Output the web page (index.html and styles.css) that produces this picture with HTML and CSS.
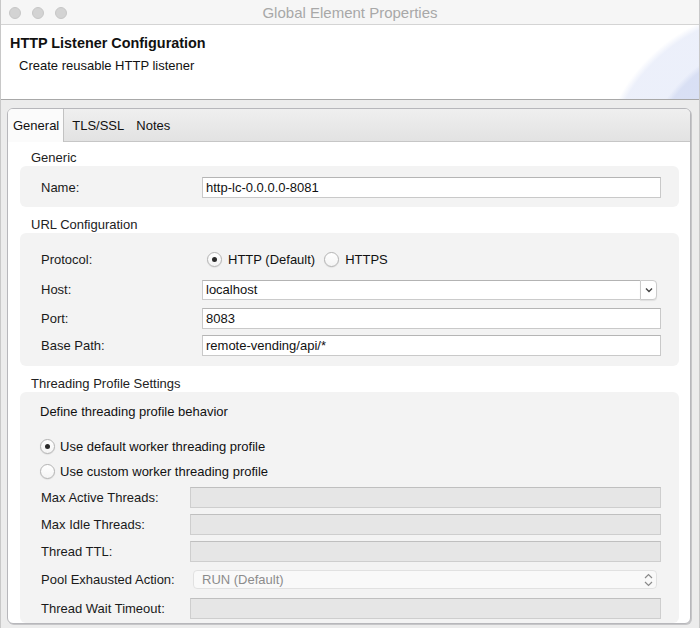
FILE: index.html
```html
<!DOCTYPE html>
<html>
<head>
<meta charset="utf-8">
<link rel="stylesheet" href="styles.css">
</head>
<body>
<div class="window">
  <div class="titlebar">
    <div class="lights"><span class="light"></span><span class="light"></span><span class="light"></span></div>
    <div class="wtitle">Global Element Properties</div>
    <div></div>
  </div>
  <div class="header">
    <div class="h-title">HTTP Listener Configuration</div>
    <div class="h-sub">Create reusable HTTP listener</div>
    <div class="swoosh"></div>
  </div>
  <div class="body">
    <div class="folder">
      <div class="tabs">
        <div class="tab active">General</div>
        <div class="tab">TLS/SSL</div>
        <div class="tab">Notes</div>
      </div>
      <div class="content">
        <div class="sec-title first">Generic</div>
        <div class="group g-generic">
          <div class="row"><div class="label">Name:</div><div class="input">http-lc-0.0.0.0-8081</div></div>
        </div>

        <div class="sec-title">URL Configuration</div>
        <div class="group g-url">
          <div class="row r-protocol">
            <div class="label">Protocol:</div>
            <div class="radios">
              <span class="radio checked"></span><span class="rtext">HTTP (Default)</span>
              <span class="radio r2"></span><span class="rtext">HTTPS</span>
            </div>
          </div>
          <div class="row r-host">
            <div class="label">Host:</div>
            <div class="select">
              <div class="select-field">localhost</div>
              <div class="select-btn"><svg width="8" height="6" viewBox="0 0 8 6"><path d="M1 1.5 L4 4.5 L7 1.5" fill="none" stroke="#444" stroke-width="1.4"/></svg></div>
            </div>
          </div>
          <div class="row r-port"><div class="label">Port:</div><div class="input">8083</div></div>
          <div class="row"><div class="label">Base Path:</div><div class="input">remote-vending/api/*</div></div>
        </div>

        <div class="sec-title">Threading Profile Settings</div>
        <div class="group g-thread">
          <div class="define">Define threading profile behavior</div>
          <div class="rrow rr1"><span class="radio checked"></span><span class="rtext">Use default worker threading profile</span></div>
          <div class="rrow rr2"><span class="radio"></span><span class="rtext">Use custom worker threading profile</span></div>
          <div class="row t-row t-first"><div class="label tl">Max Active Threads:</div><div class="input disabled"></div></div>
          <div class="row t-row"><div class="label tl">Max Idle Threads:</div><div class="input disabled"></div></div>
          <div class="row t-row"><div class="label tl">Thread TTL:</div><div class="input disabled"></div></div>
          <div class="row t-pool"><div class="label tl">Pool Exhausted Action:</div>
            <div class="pool">
              <span class="pool-text">RUN (Default)</span>
              <svg width="9" height="14" viewBox="0 0 9 14"><path d="M1 5 L4.5 1.5 L8 5 M1 9 L4.5 12.5 L8 9" fill="none" stroke="#8a8a8a" stroke-width="1.2"/></svg>
            </div>
          </div>
          <div class="row t-wait"><div class="label tl">Thread Wait Timeout:</div><div class="input disabled"></div></div>
        </div>
      </div>
    </div>
  </div>
</div>
</body>
</html>
```

FILE: styles.css
```css
* { box-sizing: border-box; }
html, body { margin: 0; padding: 0; }
body {
  width: 700px;
  height: 628px;
  overflow: hidden;
  font-family: "Liberation Sans", Arial, sans-serif;
  font-size: 13px;
  color: #1a1a1a;
  background: #ececec;
}
.window {
  height: 628px;
  display: flex;
  flex-direction: column;
  border-left: 1px solid #c8c8c8;
  border-right: 1px solid #c8c8c8;
}
.titlebar {
  height: 25px;
  flex: none;
  display: grid;
  grid-template-columns: 1fr auto 1fr;
  align-items: center;
  background: #f6f6f6;
  border-bottom: 1px solid #d4d4d4;
}
.lights {
  display: flex;
  gap: 11px;
  padding-left: 8px;
  padding-top: 1px;
}
.light {
  width: 12px;
  height: 12px;
  border-radius: 50%;
  background: #d3d3d3;
  border: 1px solid #c7c7c7;
}
.wtitle {
  color: #a8a8a8;
  font-size: 15px;
  padding-top: 1px;
}
.header {
  position: relative;
  height: 75px;
  flex: none;
  background: #fff;
  border-bottom: 1px solid #a8a8a8;
  padding: 9px 0 0 9px;
  overflow: hidden;
}
.h-title {
  font-weight: bold;
  font-size: 14.4px;
  line-height: 18px;
  color: #111;
}
.h-sub {
  margin: 6px 0 0 9px;
  line-height: 16px;
  font-size: 13px;
  color: #111;
}
.swoosh {
  position: absolute;
  right: 0;
  top: 0;
  width: 100px;
  height: 74px;
  background:
    radial-gradient(ellipse 150px 150px at 190px 160px, rgba(216,223,244,0.95) 0%, rgba(216,223,244,0.95) 96%, rgba(216,223,244,0) 100%),
    radial-gradient(ellipse 180px 170px at 180px 150px, rgba(234,238,250,0.9) 0%, rgba(234,238,250,0.9) 96%, rgba(234,238,250,0) 100%);
}
.body {
  flex: 1;
  display: flex;
  flex-direction: column;
  padding: 8px 8px 4px 6px;
  min-height: 0;
}
.folder {
  flex: 1;
  min-height: 0;
  display: flex;
  flex-direction: column;
  background: #fff;
  border: 1px solid #b7b7bb;
  border-radius: 6px;
  overflow: hidden;
  box-shadow: 1px 1px 0 #c6c6c8;
}
.tabs {
  height: 33px;
  flex: none;
  display: flex;
  background: linear-gradient(#efefef, #e2e2e2);
  box-shadow: inset 0 -1px 0 #c6c6c6;
}
.tab {
  display: flex;
  align-items: center;
  padding: 0 6px;
  color: #111;
}
.tab.active {
  background: #fbfbfb;
  border-right: 1px solid #c2c2c2;
  padding: 0 4px 0 5px;
}
.tab.active + .tab { padding-left: 8px; }
.content {
  flex: 1;
  min-height: 0;
  overflow: hidden;
  display: flex;
  flex-direction: column;
  padding: 0 11px 0 12px;
}
.sec-title {
  padding: 8px 0 0 11px;
  margin-top: 2px;
  line-height: 16px;
  color: #222;
}
.sec-title.first { margin-top: 0; }
.group {
  background: #f3f3f3;
  border-radius: 6px;
  padding: 0 18px 0 21px;
  flex: none;
}
.g-generic { padding-top: 11px; padding-bottom: 9px; }
.g-url { padding-top: 16px; padding-bottom: 10px; }
.g-thread { padding-top: 12px; flex: 1; }
.row {
  display: flex;
  align-items: center;
  height: 21px;
}
.label {
  width: 161px;
  flex: none;
  color: #1a1a1a;
}
.label.tl { width: 149px; }
.input {
  flex: 1;
  height: 21px;
  background: #fff;
  border: 1px solid #c9c9c9;
  border-top-color: #b5b5b5;
  padding-left: 3px;
  line-height: 19px;
  color: #111;
}
.input.disabled {
  background: #e6e6e6;
  border-color: #cecece;
  border-top-color: #bfbfbf;
}
.r-protocol { margin-bottom: 9px; }
.r-host { margin-bottom: 8px; }
.r-port { margin-bottom: 6px; }
.radios {
  display: flex;
  align-items: center;
  padding-left: 5px;
}
.radio {
  width: 15px;
  height: 15px;
  flex: none;
  border-radius: 50%;
  background: linear-gradient(#ffffff, #f4f4f4);
  border: 1px solid #b3b3b3;
  box-shadow: 0 0.5px 1px rgba(0,0,0,0.12);
  display: inline-flex;
  align-items: center;
  justify-content: center;
}
.radio.checked::after {
  content: "";
  width: 5px;
  height: 5px;
  border-radius: 50%;
  background: #2b2b2b;
}
.rtext { margin-left: 6px; color: #111; }
.radio.r2 { margin-left: 9px; }
.select {
  flex: 1;
  display: flex;
  height: 20px;
  margin-right: 4px;
}
.select-field {
  flex: 1;
  background: #fff;
  border: 1px solid #cbcbcb;
  border-top-color: #b3b3b3;
  border-right: none;
  padding-left: 3px;
  line-height: 18px;
  color: #111;
}
.select-btn {
  width: 17px;
  flex: none;
  background: #fff;
  border: 1px solid #cbcbcb;
  border-radius: 0 4px 4px 0;
  box-shadow: 0 1px 1px rgba(0,0,0,0.08);
  display: flex;
  align-items: center;
  justify-content: center;
}
.define {
  line-height: 16px;
  margin-left: -1px;
  color: #111;
}
.rrow {
  display: flex;
  align-items: center;
  height: 18px;
  margin-left: -1px;
}
.rr1 { margin-top: 17px; }
.rr2 { margin-top: 7px; }
.rrow .rtext { margin-left: 5px; }
.t-row { margin-top: 6px; }
.t-first { margin-top: 7px; }
.t-pool { margin-top: 8px; height: 19px; }
.t-wait { margin-top: 9px; }
.pool {
  flex: 1;
  height: 19px;
  margin: 0 4px 0 3px;
  background: #f9f9f9;
  border: 1px solid #e1e1e1;
  border-radius: 4px;
  display: flex;
  align-items: center;
  justify-content: space-between;
  padding: 0 3px 0 8px;
}
.pool-text { color: #8c8c8c; }
```
